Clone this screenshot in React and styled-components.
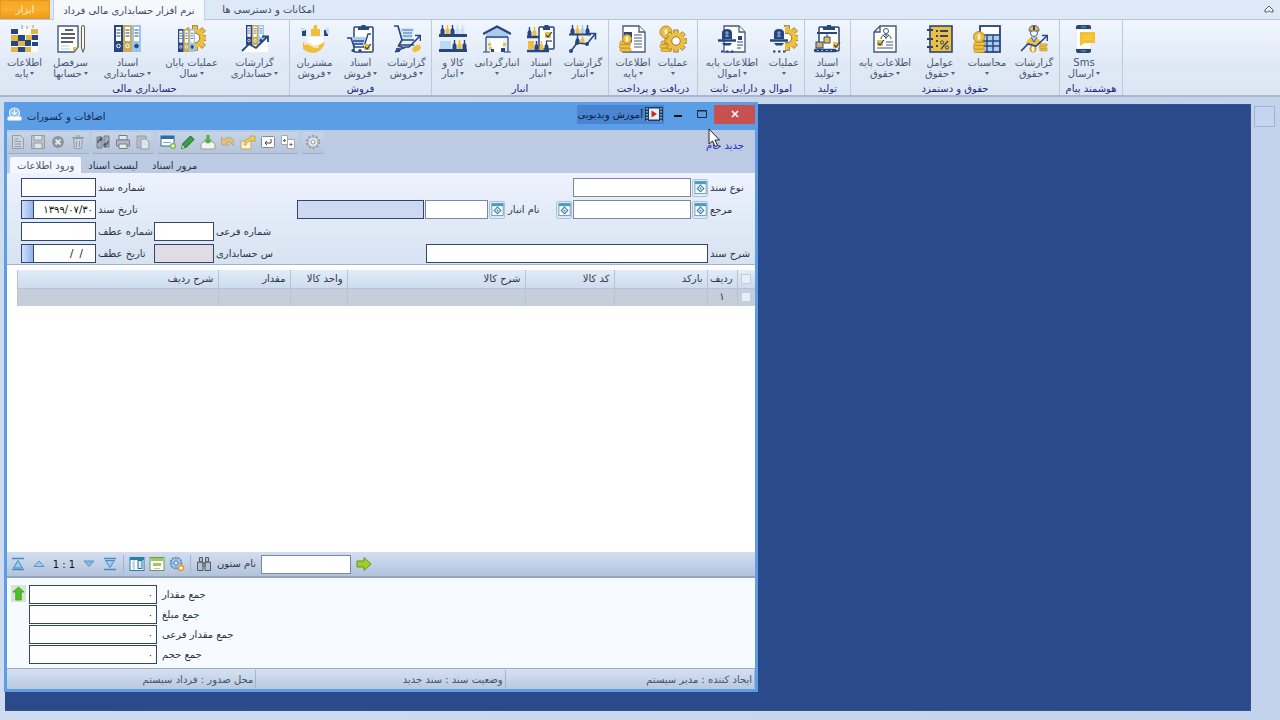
import React, { useState } from "react";
import styled, { createGlobalStyle } from "styled-components";

const NAVY = "#27457f";
const GOLD = "#eebf3c";
const SKY = "#a8cdee";

/* ---------- drawing parts shared by the ribbon icons ---------- */

const Gear = ({ x = 14, y = 14, r = 8, fill = GOLD, hole = "#fff", line = "#8d763a" }) => (
    <g>
        {[0, 45, 90, 135].map((a) => (
            <rect key={a} x={x - r * 0.26} y={y - r * 1.3} width={r * 0.52} height={r * 2.6} fill={fill}
                stroke={line} strokeWidth="0.8" transform={`rotate(${a} ${x} ${y})`} />
        ))}
        <circle cx={x} cy={y} r={r} fill={fill} />
        <circle cx={x} cy={y} r={r * 0.5} fill={hole} stroke={line} strokeWidth="1" />
    </g>
);

const Binders = ({ x = 0, y = 0, w = 27, h = 27 }) => (
    <g transform={`translate(${x} ${y}) scale(${w / 27} ${h / 27})`}>
        {[NAVY, "#c9ab5a", "#9cc4ea"].map((c, i) => (
            <g key={c} transform={`translate(${i * 9} 0)`}>
                <rect width="9" height="27" fill={c} />
                <rect x="2" y="2" width="5" height="14" fill="#fff" />
                <path d="M2.500 5h4M2.500 8h4M2.500 11h4" stroke={NAVY} strokeWidth="1" />
                <circle cx="4.500" cy="21" r="1.800" fill={i === 2 ? NAVY : "none"} stroke={i === 2 ? NAVY : "#fff"} />
            </g>
        ))}
    </g>
);

const Coins = ({ x = 0, y = 15 }) => (
    <g fill={GOLD} stroke="#b18a2c" strokeWidth="0.7">
        <rect x={x + 1} y={y + 8} width="11" height="3.5" rx="1.5" />
        <rect x={x} y={y + 4.5} width="11" height="3.5" rx="1.5" />
        <rect x={x + 1} y={y + 1} width="11" height="3.5" rx="1.5" />
    </g>
);

const Coin = ({ x, y, r = 5 }) => (
    <g>
        <circle cx={x} cy={y} r={r} fill={GOLD} stroke="#b18a2c" strokeWidth="1" />
        <path d={`M${x + 1.4} ${y - 1.6}h-2.4v1.6h2v1.7h-2.4M${x} ${y - 3}v6`} fill="none" stroke="#fff" strokeWidth="0.9" />
    </g>
);

const Trend = () => (
    <g fill="none" stroke={NAVY} strokeWidth="1.6">
        <path d="M2 26L8 18L18 19L26 9" />
        <path d="M20.500 8.500H26.500V14.500" />
        <circle cx="2" cy="26" r="1.2" fill={NAVY} />
        <circle cx="8" cy="18" r="1.2" fill={NAVY} />
        <circle cx="18" cy="19" r="1.2" fill={NAVY} />
    </g>
);

const Bottles = ({ x = 0, y = 0, n = 4, colors = [NAVY, GOLD] }) => (
    <g transform={`translate(${x} ${y})`}>
        {Array.from({ length: n }, (v, i) => (
            <path key={i} d={`M${i * 5 + 0.5} 9V5L${i * 5 + 1.8} 3V0H${i * 5 + 3.2}V3L${i * 5 + 4.5} 5V9Z`}
                fill={colors[i % colors.length]} />
        ))}
    </g>
);

const Clipboard = ({ x = 8, w = 19, y = 0, h = 27 }) => (
    <g>
        <rect x={x} y={y + 2} width={w} height={h - 2} rx="1" fill="#fff" stroke={NAVY} strokeWidth="1.5" />
        <path d={`M${x + 4} ${y + 5}V${y + 2}H${x + w / 2 - 2}V${y}H${x + w / 2 + 2}V${y + 2}H${x + w - 4}V${y + 5}Z`} fill={NAVY} />
    </g>
);

const Check = ({ x, y }) => (
    <g>
        <rect x={x} y={y} width="6" height="6" fill={GOLD} />
        <path d={`M${x + 1} ${y + 3}l2 2l4 -5`} fill="none" stroke={NAVY} strokeWidth="1.2" />
    </g>
);

const Page = ({ x = 4, w = 21 }) => (
    <g stroke="#44587a" strokeWidth="1.3" fill="#fff">
        <path d={`M${x} 1H${x + w - 6}L${x + w} 7V27H${x}Z`} />
        <path d={`M${x + w - 6} 1V7H${x + w}`} />
    </g>
);

const Hat = () => (
    <g>
        <path d="M4 14V8Q4 4 9 4Q14 4 14 8V14Z" fill={NAVY} />
        <path d="M7 8h4M7 11h4M9 6v6" stroke={SKY} strokeWidth="0.8" />
        <path d="M0 15.500H18" stroke={NAVY} strokeWidth="2.5" />
        <path d="M4 18H14L12 20.500H6Z" fill={NAVY} />
        <path d="M3 26.500h2.500M8 26.500h2.500M13 26.500h2.500" stroke={NAVY} strokeWidth="2" />
    </g>
);

const Cart = () => (
    <g fill="none" stroke={NAVY} strokeWidth="1.7">
        <path d="M7 3H21L19 14H10Z" fill="#cfe4f7" stroke="none" />
        <path d="M1 1H5L9 15H21M9 15L6 20H21" />
        <path d="M9 5H20M10 8H19M10 11H19" stroke="#6f9cc9" strokeWidth="1.3" />
        <circle cx="5" cy="25" r="1.500" />
        <path d="M5 21L12 23" />
    </g>
);

const ribbonIcons = {
    blocks: (
        <g>
            <path d="M0 3h27v24H0z" fill="#fbfaf4" />
            <path d="M11 0v4M16 1v3M22 0v3" stroke="#8f97ab" strokeWidth="1" />
            <path d="M0 4h7v5H0zM7 10h7v6H7zM0 16h7v5H0zM14 15h6v6H14zM21 10h6v5H21zM7 22h7v5H7zM21 17h6v4H21z" fill={NAVY} />
            <path d="M0 10h7v6H0zM7 16h7v5H7zM20 4h7v5H20zM15 10h6v5H15zM0 22h7v5H0zM14 22h6v5H14z" fill="#dfb648" />
        </g>
    ),
    ledger: (
        <g>
            <path d="M1 1H21V22L17 27H1Z" fill="#fff" stroke="#44587a" strokeWidth="1.4" />
            <path d="M16 27V22H21Z" fill={GOLD} />
            <path d="M8 5h8M4 9h14M4 13h14M4 17h12" stroke="#222c40" strokeWidth="1.5" />
            <path d="M4 21h8M4 24h9" stroke={SKY} strokeWidth="1" />
            <path d="M24.500 3Q24.500 0.500 26 0.500Q27.500 0.500 27.500 3V23L26 27L24.500 23Z" fill="#fff" stroke="#6b6350" strokeWidth="1.1" />
        </g>
    ),
    binders: <Binders />,
    yearEnd: <g><Gear x={17} y={13} r={9.5} /><Binders y={4} w={17} h={23} /></g>,
    accReports: (
        <g>
            <Binders x={5} w={18} h={20} />
            <path d="M1 27L8 20L14 23L27 12V27Z" fill="#fff" />
            <path d="M1 26L8 19L15 23L26 12M21 11.500H27V17" fill="none" stroke={NAVY} strokeWidth="1.8" />
        </g>
    ),
    customers: (
        <g>
            <path d="M1 11V5h4v6zM23 11V5h4v6z" fill={NAVY} />
            <path d="M24 3h4v6h-2zM0 3h4v3H0z" fill="#c5def5" />
            <path d="M10 11V4H12L13 0H16V4H19V11Z" fill={GOLD} />
            <path d="M6 12H23L21 20H9Z" fill="#fff" />
            <path d="M2 17Q7 19 10 21L16 21L24 17Q22 26 13 28Q7 28 2 24Z" fill={GOLD} />
            <path d="M3 19h5l5 3h5" fill="none" stroke="#f9dfa0" strokeWidth="2" />
        </g>
    ),
    saleDocs: (
        <g>
            <Clipboard x={7} w={19} />
            <path d="M4 12H19L17 20H7Z" fill={SKY} />
            <path d="M0 13H4L7 22H17L21 9H24M6 16H17M6 19H16" fill="none" stroke={NAVY} strokeWidth="1.4" />
            <circle cx="6" cy="25.500" r="1.6" fill={NAVY} /><circle cx="13" cy="25.500" r="1.6" fill={NAVY} />
            <Check x={17} y={19} />
        </g>
    ),
    saleReports: (
        <g>
            <Cart />
            <ellipse cx="23.500" cy="23.500" rx="4.500" ry="3" fill={GOLD} transform="rotate(-30 23.500 23.500)" />
            <path d="M2 27L12 22L16 22L27 11M22 10.500H27.500V16" fill="none" stroke={NAVY} strokeWidth="1.6" />
        </g>
    ),
    goods: (
        <g>
            <path d="M0 9h28v3H0zM0 24h28v3H0z" fill={NAVY} />
            <Bottles x={1} y={0} n={3} /><Bottles x={16} y={0} n={2} colors={["#c8dff4", "#c8dff4"]} />
            <rect x="1" y="16" width="11" height="8" fill="#bddaf3" />
            <Bottles x={13} y={15} n={3} />
        </g>
    ),
    stocktake: (
        <g>
            <path d="M3 9L14 2L25 9V13H3Z" fill={SKY} />
            <path d="M0 9L14 1.500L28 9" fill="none" stroke={NAVY} strokeWidth="2.4" />
            <path d="M3 12H25" stroke={NAVY} strokeWidth="1.4" />
            <path d="M3 12V27M25 12V27M0 27H7M21 27H28" stroke={NAVY} strokeWidth="1.2" />
            <path d="M8 14H20V27H8Z" fill="#fff" />
            <path d="M5 18h3v3H5zM20 18h3v3H20zM6 22h3v3H6z" fill={GOLD} />
            <path d="M8 24h3v3H8zM18 23h4v4H18z" fill={NAVY} />
        </g>
    ),
    stockDocs: (
        <g>
            <Bottles x={0} y={2} n={2} />
            <path d="M0 12h12M0 26h22" stroke={NAVY} strokeWidth="2.6" />
            <Clipboard x={12} w={15} h={24} />
            <Check x={18} y={7} />
            <path d="M19 16h6" stroke={NAVY} strokeWidth="1.2" />
            <rect x="1" y="16" width="6" height="8" fill={GOLD} /><Bottles x={7} y={16} n={3} />
        </g>
    ),
    stockReports: (
        <g>
            <Bottles x={1} y={0} n={4} colors={[NAVY, GOLD, SKY]} /><path d="M0 9.500H22" stroke={NAVY} strokeWidth="2" />
            <Bottles x={6} y={10} n={2} /><Trend />
        </g>
    ),
    payBase: (
        <g>
            <Page x={4} w={22} />
            <path d="M5 7h8v10H5z" fill={NAVY} />
            <path d="M15 10h8M15 13h8M15 16h8M15 19h8M15 22h8" stroke="#44587a" strokeWidth="1" />
            <Coins x={0} y={15} /><Coin x={8} y={14} r={4.5} />
        </g>
    ),
    payOps: <g><Coins x={1} y={15} /><Coin x={7} y={7} r={6} /><Gear x={17} y={16} r={8.5} /></g>,
    assetBase: (
        <g>
            <Page x={6} w={21} />
            <path d="M0 5H6V14H0z" fill="#edf3fb" />
            <path d="M19 17h6M19 20h6M19 23h4" stroke={NAVY} strokeWidth="1" />
            <rect x="20" y="11" width="4" height="4" fill={NAVY} />
            <Hat />
        </g>
    ),
    assetOps: <g><Gear x={17} y={13} r={9.5} /><path d="M0 2H15V28H0Z" fill="#ebf2fb" /><Hat /></g>,
    production: (
        <g>
            <Clipboard x={5} w={20} h={26} />
            <path d="M3 8H23" stroke={NAVY} strokeWidth="2" />
            <path d="M13 9v3M10 12h6v6h-6z" fill={GOLD} stroke={NAVY} strokeWidth="1" />
            <Check x={19} y={17} />
            <rect x="2" y="17" width="7" height="6" fill="#cbb26c" stroke={NAVY} />
            <path d="M1.500 25.500H21" stroke={NAVY} strokeWidth="3.5" strokeLinecap="round" />
            <path d="M3 25.500H20" stroke={SKY} strokeWidth="1.2" strokeDasharray="1.500 3" />
        </g>
    ),
    profile: (
        <g>
            <path d="M9 1H25V27H3V7Z M9 1V7H3" fill="#fff" stroke="#44587a" strokeWidth="1.4" />
            <circle cx="15" cy="6" r="2.5" fill="#fff" stroke="#44587a" />
            <path d="M10 14Q10 10 15 9.500Q20 10 20 14M15 10v4M12 10l3 3l3 -3" fill="none" stroke="#44587a" />
            <Check x={6} y={15} />
            <path d="M15 17h7M6 23h16M15 20h7" stroke="#44587a" strokeWidth="1.2" />
        </g>
    ),
    factors: (
        <g>
            <rect x="4" y="1" width="22" height="26" fill={GOLD} stroke={NAVY} strokeWidth="1.6" />
            <path d="M1 5h6M1 14h6M1 22h6" stroke={NAVY} strokeWidth="2.2" />
            <path d="M10 6h2M14 6h8M10 11h2M14 11h8M10 16h2M10 21h2" stroke={NAVY} strokeWidth="1.8" />
            <path d="M15 24L22 16" stroke={NAVY} strokeWidth="1.4" />
            <circle cx="16" cy="17.500" r="1.6" fill="none" stroke={NAVY} /><circle cx="21" cy="22.500" r="1.6" fill="none" stroke={NAVY} />
        </g>
    ),
    calc: (
        <g>
            <rect x="7" y="1" width="20" height="26" fill={SKY} stroke={NAVY} strokeWidth="1.8" />
            <rect x="8" y="2" width="18" height="7" fill="#fff" />
            <path d="M7 10H27M7 16H27M7 21H27M14 10V27M20 10V27" stroke={NAVY} strokeWidth="1.4" />
            <Coins x={0} y={16} /><Coin x={6} y={12} r={5.5} />
        </g>
    ),
    worker: (
        <g>
            <circle cx="14" cy="8" r="3.5" fill="#fff" stroke={NAVY} strokeWidth="0.9" />
            <path d="M9 6Q9 0.500 14 0.500Q19 0.500 19 6Z" fill={GOLD} stroke={NAVY} strokeWidth="0.8" />
            <path d="M13 1h2v4h-2z" fill={NAVY} />
            <path d="M6 20Q6 13 14 12Q20 13 21 19Z" fill={GOLD} />
            <path d="M11 12l3 5l3 -5" fill={SKY} stroke={NAVY} strokeWidth="0.8" />
            <g transform="translate(19 18) scale(0.700)"><Coins x={0} y={0} /></g>
            <Coin x={13} y={24} r={3} />
            <path d="M1 26L8 19L16 21L27 11M22 10.500H27.500V16" fill="none" stroke={NAVY} strokeWidth="1.6" />
        </g>
    ),
    sms: (
        <g>
            <rect x="6" y="4" width="15" height="20" fill="#fff" stroke="#dbe5f2" strokeWidth="0.8" />
            <path d="M6 4V2Q6 0 8 0H19Q21 0 21 2V4ZM6 24V26Q6 28 8 28H19Q21 28 21 26V24Z" fill={NAVY} />
            <path d="M11 2h5M11 26h5" stroke="#8fb0dd" strokeWidth="0.8" />
            <path d="M10 7H25V18H14L10 21Z" fill="#f4c02c" />
            <path d="M13 11h9M13 14h9" stroke="#f8d568" strokeWidth="1.2" />
        </g>
    ),
};

/* ---------- small icons for the toolbars ---------- */

const gray = "#949ca6";
const smallIcons = {
    doc: <g fill="#ccd3dc" stroke={gray}><path d="M2.500 1.500h8l3 3v10h-11z" /><path d="M4.500 5h4M4.500 7.500h7M4.500 10h7M4.500 12.500h7" /></g>,
    save: <g fill="#bcc3cc" stroke={gray}><path d="M1.500 1.500h13v13h-13z" /><path d="M4 2v4h8V2M4 14V9h8v5" fill="#dfe4ea" /></g>,
    cancel: <g><circle cx="8" cy="8" r="6" fill="#8f959b" /><path d="M5.500 5.500l5 5M10.500 5.500l-5 5" stroke="#e4e8ee" strokeWidth="2" /></g>,
    trash: <path d="M3.500 4.500h9l-1 10h-7zM2 3.500h12M6 2h4M6.500 7v6M9.500 7v6" fill="#cbd2db" stroke={gray} />,
    refresh: <g><path d="M2 3h5v11H2zM9 2h5v11H9z" fill="#a5acb5" stroke="#767e87" /><path d="M3 9Q3 5 7 5M5 3l2 2l-2 2M13 7Q13 11 9 11M11 9l-2 2l2 2" fill="none" stroke="#4f5761" strokeWidth="1.3" /></g>,
    print: <g fill="#b4bac2" stroke="#767e87"><path d="M4 1.500h8V6H4z" fill="#e6eaee" /><path d="M1.500 6h13v6h-13z" /><path d="M4 10h8v4.500H4z" fill="#e6eaee" /></g>,
    paste: <g stroke={gray}><path d="M2 2h9v12H2z" fill="#b6bdc7" /><path d="M6 5h5l3 3v7H6z" fill="#dfe4ea" /></g>,
    addRow: <g><rect x="1" y="2" width="13" height="10" fill="#fff" stroke="#2d6ca5" /><path d="M1 2h13v3H1z" fill="#2d6ca5" /><path d="M3 8.500h8" stroke="#7fa6c9" /><circle cx="13" cy="12" r="3" fill="#74b92f" /><path d="M13 10v4M11 12h4" stroke="#fff" /></g>,
    pencil: <g><path d="M1.500 14.500l1.500-5L10.500 2l3.500 3.500L6.500 13z" fill="#36a244" stroke="#1c5f2b" /><path d="M1.500 14.500l1-3.200l2.200 2.200z" fill="#e9d6a0" /></g>,
    importDown: <g><path d="M1 10l2-2h10l2 2v5H1z" fill="#f4f4f1" stroke="#9aa08f" /><path d="M6.500 1h3v4.500H12L8 10L4 5.500h2.500z" fill="#53ae3d" /></g>,
    undo: <path d="M1.500 3v8h7L6 8.500Q10 6 13.500 12Q15 3 8 3.500Q5.500 3.500 4 6z" fill="#e3c07a" stroke="#b79f6c" strokeWidth="0.7" />,
    send: <g><path d="M1 7h10v8H1z" fill="#fbf4da" stroke="#bba863" /><path d="M4 11Q4 5 10 4.500V2l5 0v6l-2.500-1.500Q7 7 6 11z" fill="#f1cd52" stroke="#b79a3c" strokeWidth="0.7" /></g>,
    enter: <g><rect x="1.500" y="2.500" width="13" height="11" rx="1" fill="#fff" stroke="#858b92" /><path d="M11 5v4H5.500M7 7L5 9l2 2" fill="none" stroke="#444" /></g>,
    copy: <g fill="#fff" stroke="#a4a9ae"><path d="M1.500 1.500h6v9h-6zM7.500 5.500h7v9h-7z" /><path d="M3 6.500h3M9.500 10.500h3M4.500 5v3M11 9v3" stroke="#666" /></g>,
    options: <g><circle cx="8" cy="8" r="6" fill="none" stroke="#9aa0a7" strokeWidth="2.5" strokeDasharray="2 1.800" /><circle cx="8" cy="8" r="5" fill="#e4e8ed" stroke="#a7adb4" /><circle cx="8" cy="8" r="2" fill="#fff" stroke="#8e969f" /></g>,
    first: <g fill="#9cc9ec" stroke="#4a8abf"><path d="M2 2.500h12M2 13.500h12" strokeWidth="1.5" /><path d="M8 4.500l4.500 7.500h-9z" /></g>,
    prev: <path d="M8 5l5 5.500H3z" fill="#9cc9ec" stroke="#5b93c0" />,
    next: <path d="M8 10.500L3 5h10z" fill="#7fb9ea" stroke="#5b93c0" />,
    last: <g fill="#9cc9ec" stroke="#4a8abf"><path d="M2 2.500h12M2 13.500h12" strokeWidth="1.5" /><path d="M8 11.500L3.500 4.500h9z" /></g>,
    columns: <g><rect x="1" y="1.500" width="14" height="13" fill="#fff" stroke="#2b7fa8" /><path d="M1 3h14" stroke="#2b7fa8" strokeWidth="2" /><path d="M5 4v10M3 7h1M3 10h1" stroke="#7fb0c8" /><rect x="9" y="4.500" width="4" height="8" fill="#cfe9f7" stroke="#2b6f98" /></g>,
    footer: <g><rect x="1" y="1.500" width="14" height="13" fill="#fff" stroke="#6b9a4f" /><path d="M2 3.500h12M4 8.500h8" stroke="#a3c760" strokeWidth="3" /><path d="M5 12.500h6" stroke="#b8cbb0" /></g>,
    gridSettings: <g><circle cx="7" cy="7" r="5.500" fill="#a7c9ea" stroke="#4a83bd" strokeWidth="1.5" strokeDasharray="2 1" /><path d="M7 2v10M2 7h10" stroke="#6d9fd0" /><circle cx="7" cy="7" r="2" fill="#eff6fd" stroke="#4a83bd" /><circle cx="12" cy="12" r="2.500" fill="#fff" stroke="#e5a33b" strokeWidth="1.8" /></g>,
    find: <g fill="#b7bfc8" stroke="#515b67"><path d="M3.500 1.500h3V6h-3zM9.500 1.500h3V6h-3zM1.500 6H7v8.500H1.500zM9 6h5.500v8.500H9z" /><path d="M7 7h2v3H7z" /></g>,
    go: <path d="M1 5h7V1.500l7 6.500l-7 6.500V11H1z" fill="#9bd122" stroke="#6b8f2b" />,
    up: <path d="M8 1L2 6.500h3V15h6V6.500h3z" fill="#4fc026" stroke="#3c8f20" strokeWidth="0.7" />,
    picker: <g><rect x="2" y="1.500" width="12" height="13" fill="#fff" stroke="#5f9cb9" /><path d="M2 1.500h12v3H2z" fill="#4c9cbd" /><path d="M8 5.500l3.500 3.500L8 12.500L4.500 9z" fill="none" stroke="#3e7ea5" strokeWidth="1.2" /><circle cx="8" cy="9" r="1" fill="#3e7ea5" /></g>,
};

const Icon = ({ name, size = 16 }) => (
    <svg width={size} height={size} viewBox="0 0 16 16" aria-hidden="true">{smallIcons[name]}</svg>
);

/* ---------- data ---------- */

const ribbonGroups = [
    { title: "حسابداری مالی", width: 290, items: [
        ["blocks", "اطلاعات", "پایه", 48], ["ledger", "سرفصل", "حسابها", 44], ["binders", "اسناد", "حسابداری", 70],
        ["yearEnd", "عملیات پایان", "سال", 58], ["accReports", "گزارشات", "حسابداری", 68],
    ] },
    { title: "فروش", width: 142, items: [
        ["customers", "مشتریان", "فروش", 48], ["saleDocs", "اسناد", "فروش", 44], ["saleReports", "گزارشات", "فروش", 48],
    ] },
    { title: "انبار", width: 177, start: true, items: [
        ["goods", "کالا و", "انبار", 42], ["stocktake", "انبارگردانی", "", 46], ["stockDocs", "اسناد", "انبار", 42],
        ["stockReports", "گزارشات", "انبار", 42],
    ] },
    { title: "دریافت و پرداخت", width: 89, start: true, items: [["payBase", "اطلاعات", "پایه", 48], ["payOps", "عملیات", "", 32]] },
    { title: "اموال و دارایی ثابت", width: 107, items: [["assetBase", "اطلاعات پایه", "اموال", 66], ["assetOps", "عملیات", "", 38]] },
    { title: "تولید", width: 46, items: [["production", "اسناد", "تولید", 44]] },
    { title: "حقوق و دستمزد", width: 209, start: true, items: [
        ["profile", "اطلاعات پایه", "حقوق", 68], ["factors", "عوامل", "حقوق", 42], ["calc", "محاسبات", "", 52],
        ["worker", "گزارشات", "حقوق", 42],
    ] },
    { title: "هوشمند پیام", width: 63, start: true, items: [["sms", "Sms", "ارسال", 48]] },
];

const toolbar = [
    [["doc", "سند"], ["save", "ذخیره"], ["cancel", "انصراف"], ["trash", "حذف"]],
    [["refresh", "بازخوانی"], ["print", "چاپ"], ["paste", "چسباندن"]],
    [["addRow", "ردیف جدید"], ["pencil", "ویرایش"], ["importDown", "دریافت"], ["undo", "برگشت"], ["send", "ارسال"], ["enter", "ثبت"], ["copy", "کپی"]],
    [["options", "تنظیمات"]],
];

const columns = [
    ["ردیف", 30], ["بارکد", 93], ["کد کالا", 89], ["شرح کالا", 178], ["واحد کالا", 57], ["مقدار", 72], ["شرح ردیف", null],
];

const totals = ["جمع مقدار", "جمع مبلغ", "جمع مقدار فرعی", "جمع حجم"];
const status = ["محل صدور : فرداد سیستم", "وضعیت سند : سند جدید", "ایجاد کننده : مدیر سیستم"];

function Picker({ label }) {
    return <PickButton aria-label={label}><Icon name="picker" size={15} /></PickButton>;
}

function Ribbon() {
    return (
        <RibbonBar>
            {ribbonGroups.map((group) => (
                <Group key={group.title} $width={group.width}>
                    <GroupItems $start={group.start}>
                        {group.items.map(([icon, top, bottom, width]) => (
                            <RibbonButton key={icon} $width={width}>
                                <svg width="28" height="28" viewBox="0 0 28 28" aria-hidden="true">{ribbonIcons[icon]}</svg>
                                <RibbonText>{top}</RibbonText>
                                <RibbonText>{bottom}<Caret $lone={!bottom} /></RibbonText>
                            </RibbonButton>
                        ))}
                    </GroupItems>
                    <GroupTitle>{group.title}</GroupTitle>
                </Group>
            ))}
        </RibbonBar>
    );
}

function EntryForm() {
    return (
        <Form>
            <LeftFields>
                <Field id="docNo" />
                <Label htmlFor="docNo">شماره سند</Label>
                <DateBox>
                    <DateDrop aria-label="انتخاب تاریخ سند" />
                    <DateInput id="docDate" defaultValue="۱۳۹۹/۰۷/۳۰" />
                </DateBox>
                <Label htmlFor="docDate">تاریخ سند</Label>
                <Field id="refNo" />
                <Label htmlFor="refNo">شماره عطف</Label>
                <Field id="subNo" />
                <Label htmlFor="subNo">شماره فرعی</Label>
                <DateBox>
                    <DateDrop aria-label="انتخاب تاریخ عطف" />
                    <DateInput id="refDate" defaultValue="/  /" $empty />
                </DateBox>
                <Label htmlFor="refDate">تاریخ عطف</Label>
                <Field id="accNo" $tone="#dfdde2" readOnly />
                <Label htmlFor="accNo">س حسابداری</Label>
            </LeftFields>
            <RightFields>
                <FieldRow>
                    <Field id="docType" $width={118} $soft />
                    <Picker label="انتخاب نوع سند" />
                    <EndLabel htmlFor="docType">نوع سند</EndLabel>
                </FieldRow>
                <FieldRow>
                    <Field aria-label="شرح انبار" $width={127} $tone="#cdd9f0" readOnly />
                    <Field id="store" $width={63} $soft />
                    <Picker label="انتخاب انبار" />
                    <StoreLabel htmlFor="store">نام انبار</StoreLabel>
                    <Picker label="شرح مرجع" />
                    <Field id="source" $width={118} $soft />
                    <Picker label="انتخاب مرجع" />
                    <EndLabel htmlFor="source">مرجع</EndLabel>
                </FieldRow>
                <FieldRow />
                <FieldRow>
                    <Field id="docNote" $width={282} />
                    <EndLabel htmlFor="docNote">شرح سند</EndLabel>
                </FieldRow>
            </RightFields>
        </Form>
    );
}

function App() {
    const [tab, setTab] = useState(0);
    return (
        <Shell>
            <GlobalStyle />
            <TabStrip>
                <FileTab>ابزار</FileTab>
                <RibbonTab $active $width={152}>نرم افزار حسابداری مالی فرداد</RibbonTab>
                <RibbonTab $width={127}>امکانات و دسترسی ها</RibbonTab>
                <Collapse aria-label="جمع کردن">
                    <svg width="10" height="9" viewBox="0 0 10 9"><path d="M1 5L5 1L9 5V7H6.500L5 5.500L3.500 7H1Z" fill="#fff" stroke="#44546b" /></svg>
                </Collapse>
            </TabStrip>
            <Ribbon />
            <Workspace>
                <Canvas>
                    <Window>
                        <TitleBar>
                            <svg width="15" height="15" viewBox="0 0 15 15" aria-hidden="true">
                                <circle cx="7.500" cy="6" r="5" fill="#8fc1f0" stroke="#e7f3ff" strokeWidth="1.2" />
                                <path d="M7.500 2.500v5M5 5.500l2.500 2.500l2.500-2.500M1 10h13v3H1z" fill="#fff" stroke="#fff" />
                            </svg>
                            <Title>اضافات و کسورات</Title>
                            <VideoButton>
                                آموزش ویدیویی
                                <svg width="18" height="14" viewBox="0 0 18 14" aria-hidden="true">
                                    <rect width="18" height="14" fill="#1c3e5e" />
                                    <rect x="4" y="1.500" width="10" height="11" fill="#e9eef3" />
                                    <path d="M2 1v13M16 1v13" stroke="#a9c8e0" strokeWidth="1.5" strokeDasharray="1.500 1.500" />
                                    <path d="M6.500 3.500L12 7L6.500 10.500Z" fill="#c9252d" />
                                </svg>
                            </VideoButton>
                            <WinButton aria-label="کوچک کردن"><svg width="10" height="10"><path d="M1 7h8" stroke="#111" strokeWidth="2" /></svg></WinButton>
                            <WinButton aria-label="بزرگ کردن"><svg width="10" height="10"><path d="M.500 1.500h9v7h-9zM0 2h10" fill="none" stroke="#1b2b46" /></svg></WinButton>
                            <CloseButton aria-label="بستن"><svg width="8" height="8"><path d="M1 1l6 6M7 1L1 7" stroke="#fff" strokeWidth="1.6" /></svg></CloseButton>
                        </TitleBar>
                        <Head>
                            <HeadRow>
                                {toolbar.map((set, i) => (
                                    <ToolSet key={i}>
                                        {set.map(([icon, name]) => (
                                            <ToolButton key={icon} aria-label={name}><Icon name={icon} /></ToolButton>
                                        ))}
                                    </ToolSet>
                                ))}
                                <RawLink href="#raw">جدید خام</RawLink>
                            </HeadRow>
                            <PageTabs>
                                {["ورود اطلاعات", "لیست اسناد", "مرور اسناد"].map((name, i) => (
                                    <PageTab key={name} $active={tab === i} onClick={() => setTab(i)}>{name}</PageTab>
                                ))}
                            </PageTabs>
                        </Head>
                        <EntryForm />
                        <GridArea>
                            <Table dir="rtl">
                                <thead>
                                    <tr>
                                        <Th $width={18}><Tick type="checkbox" aria-label="همه" /></Th>
                                        {columns.map(([name, width]) => <Th key={name} $width={width}>{name}</Th>)}
                                    </tr>
                                </thead>
                                <tbody>
                                    <tr>
                                        <Td><Tick type="checkbox" aria-label="ردیف ۱" /></Td>
                                        <Td $center>۱</Td>
                                        {columns.slice(1).map(([name]) => <Td key={name} />)}
                                    </tr>
                                </tbody>
                            </Table>
                        </GridArea>
                        <Navigator>
                            <NavSet $gap={5}>
                                <NavButton aria-label="اولین"><Icon name="first" /></NavButton>
                                <NavButton aria-label="قبلی"><Icon name="prev" /></NavButton>
                                <Counter>1 : 1</Counter>
                                <NavButton aria-label="بعدی"><Icon name="next" /></NavButton>
                                <NavButton aria-label="آخرین"><Icon name="last" /></NavButton>
                            </NavSet>
                            <Divider />
                            <NavSet $gap={4}>
                                <NavButton aria-label="ستونها"><Icon name="columns" /></NavButton>
                                <NavButton aria-label="پانویس"><Icon name="footer" /></NavButton>
                                <NavButton aria-label="تنظیمات جدول"><Icon name="gridSettings" /></NavButton>
                            </NavSet>
                            <Divider />
                            <NavButton aria-label="جستجو"><Icon name="find" /></NavButton>
                            <Label htmlFor="column">نام ستون</Label>
                            <Field id="column" $width={90} $soft />
                            <NavButton aria-label="برو"><Icon name="go" /></NavButton>
                        </Navigator>
                        <Summary>
                            <UpButton aria-label="بالا"><Icon name="up" size={15} /></UpButton>
                            <Totals>
                                {totals.map((name, i) => (
                                    <TotalRow key={name}>
                                        <Field id={`total${i}`} $width={128} defaultValue="۰" />
                                        <Label htmlFor={`total${i}`}>{name}</Label>
                                    </TotalRow>
                                ))}
                            </Totals>
                        </Summary>
                        <StatusBar>
                            {status.map((text) => <StatusCell key={text} dir="rtl">{text}</StatusCell>)}
                        </StatusBar>
                        <Pointer width="12" height="20" viewBox="0 0 12 20">
                            <path d="M1 1V16L4.500 13L7 18.500L9.500 17.500L7 12H11.500Z" fill="#fff" stroke="#222" />
                        </Pointer>
                    </Window>
                </Canvas>
                <Side><SideButton aria-label="پنل" /></Side>
            </Workspace>
        </Shell>
    );
}
export default App;

const GlobalStyle = createGlobalStyle`
    * {
        box-sizing: border-box;
    }
    body {
        margin: 0;
    }
    body, button, input {
        font-family: "DejaVu Sans", sans-serif;
        font-size: 10px;
        color: #2c3648;
    }
    button {
        padding: 0;
        border: 0;
        background: none;
        white-space: nowrap;
    }
    svg {
        display: block;
        flex: none;
    }
`;

const Shell = styled.div`
    display: flex;
    flex-direction: column;
    min-height: 100vh;
    background: #c8d6ec;
`;

const TabStrip = styled.div`
    display: flex;
    align-items: stretch;
    height: 20px;
    background: #dde9f6;
    border-bottom: 1px solid #b9c7da;
`;

const FileTab = styled.button`
    width: 50px;
    margin-right: 3px;
    color: #fff3c4;
    background: linear-gradient(#f9a51c, #f7b02f 50%, #f39a10);
    border: 1px solid #e39a2c;
`;

const RibbonTab = styled.button`
    width: ${(props) => props.$width}px;
    margin-bottom: ${(props) => (props.$active ? "-1px" : "0")};
    background: ${(props) => (props.$active ? "#f5f9fe" : "transparent")};
    border: solid #c3d0e2;
    border-width: ${(props) => (props.$active ? "0 1px" : "0")};
    color: #3a4a66;
`;

const Collapse = styled.button`
    margin-left: auto;
    padding: 0 6px;
`;

const RibbonBar = styled.div`
    display: flex;
    height: 77px;
    background: linear-gradient(#f1f6fe, #dfe9f6 60%, #dbe6f4);
    border-bottom: 2px solid #a9b7ca;
`;

const Group = styled.div`
    display: flex;
    flex-direction: column;
    flex: none;
    width: ${(props) => props.$width}px;
    border-right: 1px solid #bccadd;
`;

const GroupItems = styled.div`
    display: flex;
    justify-content: ${(props) => (props.$start ? "flex-start" : "center")};
    padding-top: 5px;
`;

const RibbonButton = styled.button`
    display: flex;
    flex-direction: column;
    align-items: center;
    width: ${(props) => props.$width}px;
`;

const RibbonText = styled.span`
    display: flex;
    align-items: center;
    height: 11px;
    line-height: 11px;
    color: #475672;
    &:first-of-type {
        margin-top: 4px;
    }
`;

const Caret = styled.i`
    margin-left: ${(props) => (props.$lone ? 0 : 2)}px;
    border: solid transparent;
    border-width: 3px 2px 0;
    border-top-color: #55637c;
`;

const GroupTitle = styled.div`
    line-height: 12px;
    margin-top: 4px;
    text-align: center;
    white-space: nowrap;
    color: #24247a;
`;

const Workspace = styled.div`
    display: flex;
    flex: 1;
    padding: 7px 0 9px 5px;
    background: linear-gradient(90deg, #cfdcf0, #c3d3eb);
`;

const Canvas = styled.main`
    position: relative;
    flex: 1;
    min-height: 607px;
    background: #2b4a8c;
    border: solid #35508a;
    border-width: 1px 1px 1px 0;
`;

const Side = styled.aside`
    width: 29px;
    padding: 2px 4px 0 3px;
`;

const SideButton = styled.button`
    width: 21px;
    height: 21px;
    border: 1px solid #9fb3d3;
    background: #c6d5ee;
`;

const Window = styled.section`
    position: absolute;
    top: -3px;
    left: -1px;
    bottom: 18px;
    width: 754px;
    display: flex;
    flex-direction: column;
    padding: 0 3px 3px;
    background: #5b9ee6;
`;

const TitleBar = styled.header`
    display: flex;
    align-items: center;
    height: 28px;
    padding-bottom: 4px;
`;

const Title = styled.div`
    margin: 6px auto 0 5px;
    line-height: 14px;
    color: #16294a;
`;

const VideoButton = styled.button`
    display: flex;
    align-items: center;
    gap: 2px;
    height: 19px;
    padding: 0 1px;
    margin-right: 2px;
    background: #4985d0;
    color: #0d1e46;
`;

const WinButton = styled.button`
    display: flex;
    align-items: center;
    justify-content: center;
    width: 24px;
    height: 19px;
`;

const CloseButton = styled(WinButton)`
    width: 41px;
    background: #c75050;
`;

const Head = styled.div`
    display: flex;
    flex-direction: column;
    justify-content: space-between;
    height: 43px;
    background: #bccbe3;
`;

const HeadRow = styled.div`
    display: flex;
    align-items: flex-start;
    padding-top: 2px;
`;

const ToolSet = styled.div`
    display: flex;
    height: 22px;
    padding: 0 1px;
    background: linear-gradient(#c6d4e8, #b7c5da);
    border-bottom: 1px solid #9fafc8;
    border-radius: 2px;
    & + & {
        margin-left: 3px;
    }
`;

const ToolButton = styled.button`
    display: flex;
    align-items: center;
    justify-content: center;
    width: 20px;
    height: 20px;
`;

const RawLink = styled.a`
    margin: 7px 11px 0 auto;
    line-height: 14px;
    color: #2525c8;
    text-decoration: none;
`;

const PageTabs = styled.div`
    display: flex;
    padding-left: 3px;
`;

const PageTab = styled.button`
    height: 16px;
    padding: 0 7px;
    border-radius: 2px 2px 0 0;
    background: ${(props) => (props.$active ? "#f4f8fe" : "transparent")};
    color: ${(props) => (props.$active ? "#4b5870" : "#26324a")};
`;

const Form = styled.div`
    display: flex;
    justify-content: space-between;
    height: 92px;
    padding: 5px 2px 0 14px;
    background: linear-gradient(#edf2fe, #d7e3f1);
    border-bottom: 1px solid #a3b3ca;
`;

const LeftFields = styled.div`
    display: grid;
    grid-template-columns: 75px 54px 60px 60px;
    grid-auto-rows: 19px;
    gap: 3px 2px;
    & > :nth-child(3),
    & > :nth-child(5) {
        grid-column-start: 1;
    }
`;

const RightFields = styled.div`
    display: flex;
    flex-direction: column;
    align-items: flex-end;
    gap: 3px;
`;

const FieldRow = styled.div`
    display: flex;
    align-items: center;
    gap: 1px;
    height: 19px;
`;

const Label = styled.label`
    align-self: center;
    line-height: 14px;
    white-space: nowrap;
`;

const EndLabel = styled(Label)`
    width: 44px;
    padding-left: 1px;
`;

const StoreLabel = styled(Label)`
    width: 49px;
    padding-left: 2px;
`;

const Field = styled.input`
    width: ${(props) => (props.$width ? `${props.$width}px` : "100%")};
    height: 19px;
    padding: 0 3px;
    border: 1px solid ${(props) => (props.$soft ? "#7c879a" : "#31466f")};
    background: ${(props) => props.$tone || "#fff"};
    text-align: right;
    outline: 0;
`;

const DateBox = styled.div`
    display: flex;
    border: 1px solid #31466f;
    background: #fff;
`;

const DateDrop = styled.button`
    width: 12px;
    background: linear-gradient(90deg, #cfe0fa, #8fb2ea);
    border-right: 1px solid #31466f;
`;

const DateInput = styled.input`
    flex: 1;
    min-width: 0;
    padding: 0 ${(props) => (props.$empty ? 12 : 2)}px 0 0;
    border: 0;
    text-align: right;
    outline: 0;
    color: #111;
`;

const PickButton = styled.button`
    display: flex;
    align-items: center;
    justify-content: center;
    width: 16px;
    height: 18px;
    border: 1px solid #a9c3dd;
    border-radius: 2px;
`;

const GridArea = styled.div`
    flex: 1;
    padding: 5px 0 0 10px;
    background: #fff;
`;

const Table = styled.table`
    width: 100%;
    table-layout: fixed;
    border-collapse: collapse;
`;

const Th = styled.th`
    width: ${(props) => (props.$width ? `${props.$width}px` : "auto")};
    height: 18px;
    padding: 0 4px;
    font-weight: normal;
    line-height: 14px;
    text-align: right;
    white-space: nowrap;
    background: linear-gradient(#e2ecf9, #cddbec);
    border-left: 1px solid #b4c3d8;
    border-bottom: 1px solid #b4c3d8;
`;

const Td = styled.td`
    height: 18px;
    padding: 0 4px;
    line-height: 14px;
    text-align: ${(props) => (props.$center ? "center" : "right")};
    background: #c5ced9;
    border-left: 1px solid #b8c2d0;
`;

const Tick = styled.input`
    appearance: none;
    display: block;
    width: 10px;
    height: 10px;
    margin: 0;
    background: #e8eef5;
    border: 1px solid #c3cedc;
`;

const Navigator = styled.div`
    display: flex;
    align-items: center;
    gap: 5px;
    height: 26px;
    padding-left: 3px;
    background: linear-gradient(#d3dff0, #b3c3dc);
    border-bottom: 2px solid #94a5bf;
`;

const NavSet = styled.div`
    display: flex;
    align-items: center;
    gap: ${(props) => props.$gap}px;
`;

const NavButton = styled.button`
    width: 16px;
    height: 16px;
`;

const Counter = styled.span`
    width: 24px;
    text-align: center;
    white-space: nowrap;
    color: #111;
`;

const Divider = styled.i`
    width: 1px;
    height: 18px;
    background: #a3b5cf;
`;

const Summary = styled.div`
    display: flex;
    gap: 3px;
    height: 90px;
    padding: 7px 4px;
    background: #f7fbff;
`;

const UpButton = styled.button`
    width: 15px;
    height: 17px;
    background: #d9e3d8;
`;

const Totals = styled.div`
    display: flex;
    flex-direction: column;
    gap: 1px;
`;

const TotalRow = styled.div`
    display: flex;
    gap: 5px;
`;

const StatusBar = styled.footer`
    display: flex;
    align-items: center;
    height: 21px;
    border-top: 1px solid #9cabc2;
    background: linear-gradient(#d6e1f2, #b9c9e0);
`;

const StatusCell = styled.div`
    flex: 1;
    padding: 2px 2px 0;
    line-height: 16px;
    border-right: 1px solid #a5b4ca;
    color: #44526a;
`;

const Pointer = styled.svg`
    position: absolute;
    top: 26px;
    left: 704px;
`;
